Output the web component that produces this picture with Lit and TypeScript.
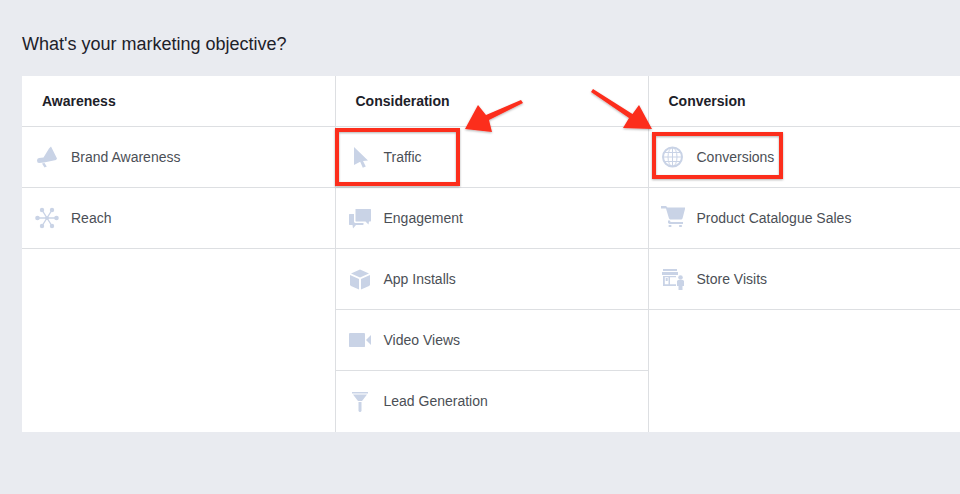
import { LitElement, html, css, svg } from "lit";
import { customElement } from "lit/decorators.js";

const icons: Record<string, unknown> = {
  megaphone: svg`<path d="M2 15.500Q2 13 4 13l4.500-.5L14 3.500 16 1.500l6 12-1 1.500-12 2.500-5 .5Q2 18 2 15.500z"/><path d="M7 18.500l2.500-.5 2.300 3.500-2.300 1z"/>`,
  reach: svg`<g stroke="currentColor" stroke-width="1.400"><path d="M12 12 7 4M12 12l5-8M12 12H3M12 12h9M12 12l-5 8M12 12l5 8"/></g><circle cx="7" cy="4" r="2.200"/><circle cx="17" cy="4" r="2.200"/><circle cx="2.500" cy="12" r="2.300"/><circle cx="21.500" cy="12" r="2.300"/><circle cx="7" cy="20" r="2.200"/><circle cx="17" cy="20" r="2.200"/><circle cx="12" cy="12" r="1.800"/>`,
  cursor: svg`<path d="M5 2 19 15.500l-5 .5 2.800 5.500-3 1.300-2.600-6L5 20z"/>`,
  chat: svg`<path d="M6.500 3h15l.5.5V15l-.5.5h-1.500l-.5 3-3-3h-9.500l-.5-.5z"/><path d="M0 8.500 .5 8h4.500v8l1 1h8.500v1.500l-.5.5H7l-3 3.500-.5-3.500H.5L0 18.500z"/>`,
  box: svg`<path d="M11 2.500 20 6.500 11 10.500 2 6.500z"/><path d="M1 8 10 12v10.500l-8-3.500-1-1z"/><path d="M21 8 12 12v10.500l8-3.500 1-1z"/>`,
  video: svg`<path d="M.5 5h15l.5.5v13l-.5.5H.5L0 18.500v-13z"/><path d="M17 12l5-5v10z"/>`,
  funnel: svg`<path d="M3 3h16v1.500H3z"/><path d="M4 5.500h14l-5 6.500H9z"/><path d="M9.500 13h3v9l-1 1h-1l-1-1z"/>`,
  globe: svg`<g fill="none" stroke="currentColor"><circle cx="10.500" cy="12" r="9.500" stroke-width="2"/><ellipse cx="10.500" cy="12" rx="4.500" ry="9.500"/><path d="M10.500 2.500v19M1 12h19M2.500 7.500h16M2.500 16.500h16"/></g>`,
  cart: svg`<path d="M-1 0h5l1.500 1.500H23V3l-2.500 9.500-1 1H8L7 12.500 4 2.500H-1z"/><path d="M6 14.500h2l.5 1.500H21v2H7.500L6 17z"/><rect x="6.500" y="19" width="3" height="2" rx=".8"/><rect x="17" y="19" width="3" height="2" rx=".8"/>`,
  store: svg`<path d="M1 2h14v2H1zM0 5h16v3H0z"/><path d="M1 9h13v1.300H8v7H6.500v-7H2.800v7H14V19H1z"/><path d="M3.700 11h2v3h-2z"/><circle cx="18.500" cy="10.500" r="2.300"/><path d="M15 14l1-1h5l1 1v5h-1.500v4h-4v-4H15z"/>`,
};

const columns = [
  {
    title: "Awareness",
    rows: [
      ["megaphone", "Brand Awareness"],
      ["reach", "Reach"],
    ],
  },
  {
    title: "Consideration",
    rows: [
      ["cursor", "Traffic"],
      ["chat", "Engagement"],
      ["box", "App Installs"],
      ["video", "Video Views"],
      ["funnel", "Lead Generation"],
    ],
  },
  {
    title: "Conversion",
    rows: [
      ["globe", "Conversions"],
      ["cart", "Product Catalogue Sales"],
      ["store", "Store Visits"],
    ],
  },
];

@customElement("app-root")
export class AppRoot extends LitElement {
  static styles = css`
    :host {
      display: block;
      position: relative;
      height: 494px;
      overflow: hidden;
      background: #e9ebf0;
      font-family: "Liberation Sans", Arial, sans-serif;
    }
    .page {
      padding: 34px 0 0 22px;
    }
    h1 {
      margin: 0 0 22px;
      height: 20px;
      font-size: 18px;
      line-height: 20px;
      font-weight: 400;
      color: #1d2129;
    }
    .table {
      display: grid;
      grid-template-columns: 314px 313px 1fr;
      height: 356px;
      background: #fff;
    }
    .col {
      border-right: 1px solid #dddfe2;
    }
    .col:last-child {
      border-right: 0;
    }
    .head {
      height: 51px;
      box-sizing: border-box;
      border-bottom: 1px solid #dddfe2;
      padding-left: 20px;
      display: flex;
      align-items: center;
      font-size: 14px;
      font-weight: 700;
      color: #1d2129;
    }
    .col:nth-child(n + 2) .head {
      padding-left: 19.5px;
    }
    .row {
      height: 61px;
      box-sizing: border-box;
      border-bottom: 1px solid #dddfe2;
      padding-left: 13px;
      display: flex;
      align-items: center;
      gap: 12px;
      font-size: 14px;
      color: #4b4f56;
    }
    .col:nth-child(n + 2) .row {
      gap: 10.5px;
    }
    .row.end {
      border-bottom-color: transparent;
    }
    .row svg {
      width: 24px;
      height: 24px;
      fill: #c9d3e6;
      color: #c9d3e6;
      flex: none;
      overflow: visible;
    }
    .marks {
      position: absolute;
      left: 0;
      top: 0;
      width: 960px;
      height: 494px;
      pointer-events: none;
    }
  `;

  render() {
    return html`
      <div class="page">
        <h1>What's your marketing objective?</h1>
        <div class="table">
          ${columns.map(
            (c) => html`
              <div class="col">
                <div class="head">${c.title}</div>
                ${c.rows.map(
                  ([icon, label], i) => html`
                    <div class="row ${i === 4 ? "end" : ""}">
                      <svg viewBox="0 0 24 24">${icons[icon]}</svg>
                      <span>${label}</span>
                    </div>
                  `
                )}
              </div>
            `
          )}
        </div>
      </div>
      <svg class="marks" viewBox="0 0 960 494">
        <defs>
          <filter id="sh" x="-10%" y="-10%" width="120%" height="130%">
            <feDropShadow dx="0" dy="1" stdDeviation="1" flood-color="#000" flood-opacity="0.3" />
          </filter>
        </defs>
        <g filter="url(#sh)">
          <rect x="337" y="130" width="121" height="54" fill="none" stroke="#fc2d1f" stroke-width="4" />
          <rect x="654" y="134" width="127" height="43" fill="none" stroke="#fc2d1f" stroke-width="4" />
          <path
            d="M465 129 478 105 486 115 521 100 523 103 489 120 492 132z"
            fill="#fc2d1f"
          />
          <path
            d="M652 129 639 105 632.500 114 593 89 591 92 629 118 623 128z"
            fill="#fc2d1f"
          />
        </g>
      </svg>
    `;
  }
}
